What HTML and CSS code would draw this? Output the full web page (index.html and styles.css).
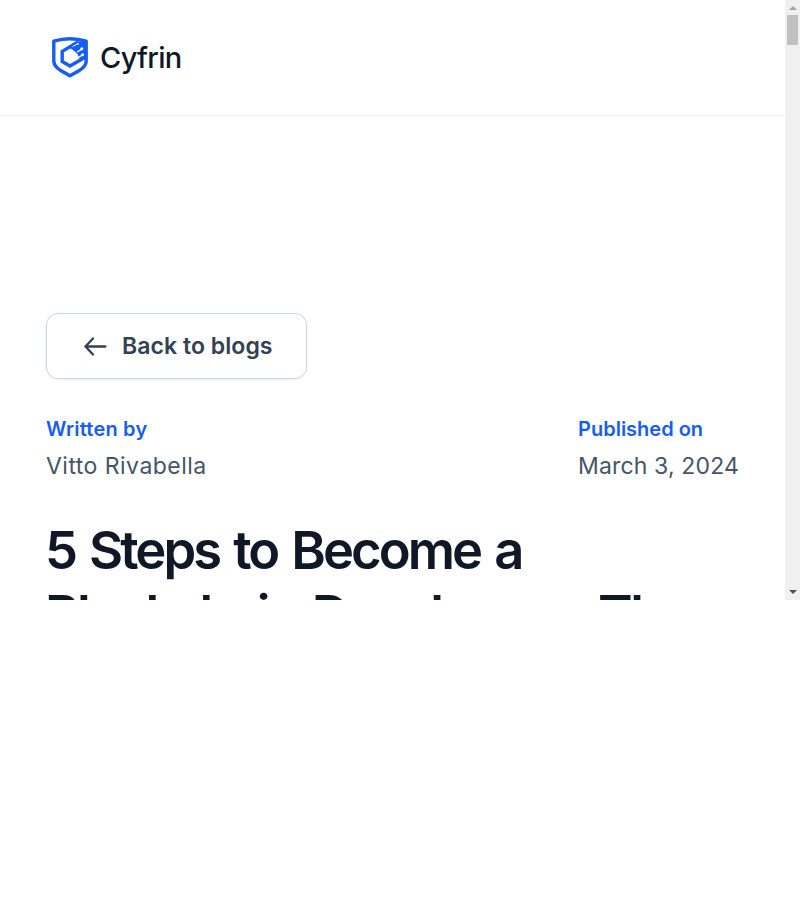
FILE: index.html
```html
<!DOCTYPE html>
<html lang="en">
<head>
<meta charset="utf-8">
<title>5 Steps to Become a Blockchain Developer</title>
<link rel="stylesheet" href="styles.css">
</head>
<body>
<div class="window">
  <div class="page">
    <header class="header">
      <a class="brand">
        <svg class="shield" viewBox="0 0 36 42" width="36" height="42" fill="none" aria-hidden="true">
          <path d="M1.8 5.2Q18 .2 34.2 5.2V25C34.2 32 26 35 18 39.8C10 35 1.8 32 1.8 25Z" stroke="#165df5" stroke-width="3.4" stroke-linejoin="round"/>
          <path d="M34 20.8L18 30L10.2 25.5V15.4L26 6" stroke="#165df5" stroke-width="3.4"/>
          <path d="M18 12L24 5.5L35 5V22.5L28 25L25.5 18L21 14Z" fill="#165df5"/>
          <path d="M25 16L29.5 13.3M26 21.7L30.5 19" stroke="#fff" stroke-width="1.4"/>
          <path d="M20.5 10.6L25.8 7.6" stroke="#fff" stroke-width="1"/>
          <g fill="#fff"><circle cx="26" cy="7.8" r=".9"/><circle cx="29.8" cy="12.8" r="1.5"/><circle cx="30.6" cy="18.8" r="1.5"/></g>
        </svg>
        <span class="brand-name">Cyfrin</span>
      </a>
    </header>
    <main class="article">
      <a class="back">
        <svg width="24" height="20" viewBox="0 0 24 20" fill="none" stroke="#344054" stroke-width="2.3" stroke-linecap="round" stroke-linejoin="round" aria-hidden="true"><path d="M21.4 10.5H1.4M9 2.5L1.4 10.5L9 18.5"/></svg>
        <span>Back to blogs</span>
      </a>
      <div class="meta">
        <div><div class="label author-label">Written by</div><div class="value author">Vitto Rivabella</div></div>
        <div><div class="label">Published on</div><div class="value date">March 3, 2024</div></div>
      </div>
      <h1 class="title"><span class="line">5 Steps to Become a</span><span class="line second">Blockchain Developer - The</span></h1>
    </main>
  </div>
  <div class="scrollbar">
    <div class="arrow up"></div>
    <div class="thumb"></div>
    <div class="arrow down"></div>
  </div>
</div>
</body>
</html>
```
FILE: styles.css
```css
* { box-sizing: border-box; }
body { margin: 0; background: #fff; font-family: Inter, sans-serif; }
.window { display: flex; width: 800px; height: 600px; overflow: hidden; }
.page { width: 785px; height: 600px; overflow: hidden; }
.header { height: 116px; padding: 36px 52px 0; border-bottom: 1px solid #f2f4f7; }
.brand { display: flex; height: 42px; align-items: center; gap: 12px; }
.shield { flex: none; }
.brand-name { padding-top: 2px; font-size: 29px; line-height: 42px; font-weight: 550; letter-spacing: -.7px; color: #101828; }
.article { padding: 197px 46px 0; }
.back { display: flex; align-items: center; gap: 14px; width: 261px; height: 66px; padding-left: 37px; border: 1px solid #d0d5dd; border-radius: 12px; box-shadow: 0 1px 3px rgba(16,24,40,.06); color: #344054; font-size: 23px; font-weight: 600; letter-spacing: .06px; white-space: nowrap; }
.meta { display: flex; justify-content: space-between; margin-top: 35px; }
.label { font-size: 20px; line-height: 30px; font-weight: 600; color: #165df5; }
.author-label { letter-spacing: .2px; }
.value { margin-top: 4px; font-size: 23px; line-height: 36px; color: #475467; }
.author { letter-spacing: .47px; }
.date { letter-spacing: .15px; }
.title { margin: 34px 0 0 -1px; font-size: 52.5px; line-height: 64px; font-weight: 600; color: #101828; white-space: nowrap; letter-spacing: -2.95px; word-spacing: 3.75px; }
.line { display: block; }
.second { letter-spacing: -2.6px; }
.scrollbar { display: flex; flex-direction: column; align-items: center; width: 15px; height: 600px; background: #f0f0f0; }
.thumb { width: 11px; height: 30px; margin-top: 5px; background: #c0c0c0; }
.arrow { width: 0; height: 0; border-left: 4px solid transparent; border-right: 4px solid transparent; }
.up { margin-top: 6px; border-bottom: 4px solid #a3a3a3; }
.down { margin-top: auto; margin-bottom: 6px; border-top: 4px solid #505050; }
```
